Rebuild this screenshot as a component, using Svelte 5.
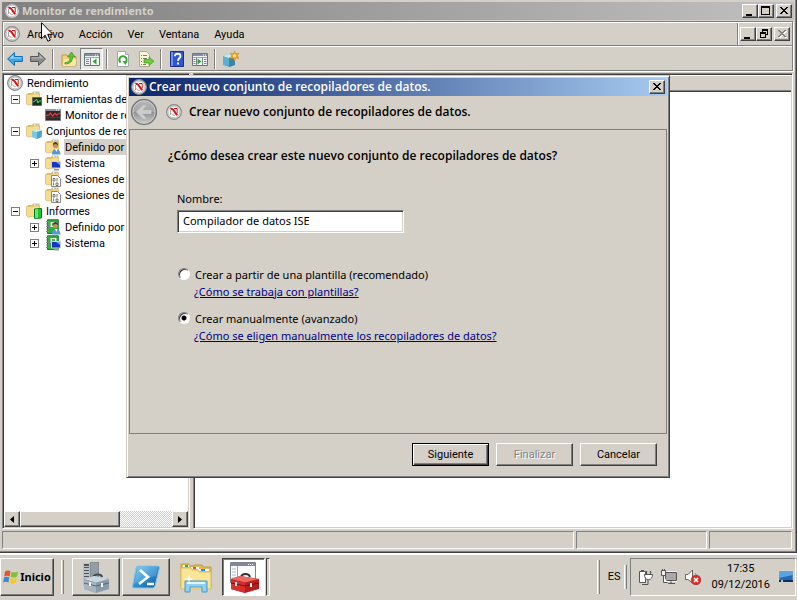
<script>
  const menus = ['Archivo', 'Acción', 'Ver', 'Ventana', 'Ayuda'];
  const tree = [
    { level: 0, icon: 'gauge', text: 'Rendimiento' },
    { level: 1, sign: '-', icon: 'folder', badge: 'monitor', text: 'Herramientas de' },
    { level: 2, icon: 'chart', text: 'Monitor de re' },
    { level: 1, sign: '-', icon: 'folder', badge: 'cube', text: 'Conjuntos de rec' },
    { level: 2, icon: 'folder', badge: 'user', text: 'Definido por', selected: true },
    { level: 2, sign: '+', icon: 'folder', badge: 'screen', text: 'Sistema' },
    { level: 2, icon: 'folder', badge: 'binary', text: 'Sesiones de' },
    { level: 2, icon: 'folder', badge: 'binary', text: 'Sesiones de' },
    { level: 1, sign: '-', icon: 'folder', badge: 'report', text: 'Informes' },
    { level: 2, sign: '+', icon: 'book', badge: 'user', text: 'Definido por' },
    { level: 2, sign: '+', icon: 'book', badge: 'screen', text: 'Sistema' }
  ];
  const tools = [
    ['back', 'forward'],
    ['up', 'panel'],
    ['refresh', 'export'],
    ['help', 'pane'],
    ['newset']
  ];
  const toolNames = {
    back: 'Atrás', forward: 'Adelante', up: 'Subir un nivel', panel: 'Árbol de consola',
    refresh: 'Actualizar', export: 'Exportar lista', help: 'Ayuda', pane: 'Panel de acciones', newset: 'Nuevo'
  };
  let name = $state('Compilador de datos ISE');
  let mode = $state('manual');
</script>

{#snippet gauge()}
  <svg class="i16" viewBox="0 0 16 16" aria-hidden="true">
    <circle cx="8" cy="8" r="7.4" fill="#dcdcdc" stroke="#858585" stroke-width="1.1" />
    <circle cx="8" cy="8" r="5.8" fill="#fff" stroke="#bdbdbd" stroke-width=".8" />
    <path d="M4.500 11V6" stroke="#a5a5a5" stroke-width="1" />
    <path d="M4.500 5C6 4.300 7.500 6 8.500 7.500s1.500 2.700 3 3.500" fill="none" stroke="#d31313" stroke-width="2" />
    <path d="M8 4.500h3.200v4.500" fill="none" stroke="#d31313" stroke-width="1" />
    <path d="M5.500 9.500c.5 1.500 1.500 2 3 2" fill="none" stroke="#c66" stroke-width=".8" />
  </svg>
{/snippet}

{#snippet glyph(kind)}
  <svg class="g" viewBox="0 0 12 10" aria-hidden="true" shape-rendering="crispEdges">
    {#if kind === 'min'}
      <path d="M2 8h6v2H2z" />
    {:else if kind === 'max'}
      <path d="M1 0h9v9H1zM2 2v6h7V2z" fill-rule="evenodd" />
    {:else if kind === 'restore'}
      <path d="M4 0h6v6H8V5h1V2H5v1H4zM2 3h6v6H2zM3 5v3h4V5z" fill-rule="evenodd" />
    {:else}
      <path d="M2 1h2v1h1v1h2V2h1V1h2v1H9v1H8v1H7v1h1v1h1v1h1v1H8V7H7V6H5v1H4v1H2V7h1V6h1V5h1V4H4V3H3V2H2z" />
    {/if}
  </svg>
{/snippet}

{#snippet treeIcon(icon, badge)}
  <svg class="i16" viewBox="0 0 16 16" aria-hidden="true">
    {#if icon === 'folder'}
      <path d="M1 3.5 2 2h4l1-1.5h6.5V13H1z" fill="#e3bd62" />
      <path d="M8 1.2h4v2H8z" fill="#fff" /><path d="M9.5 1.4h2v1h-2z" fill="#4ba0dc" />
      <path d="M.5 3.5h6L8 2.8h5.5V13L2 14 .5 13z" fill="#f5dc90" stroke="#dbb866" stroke-width=".7" />
    {:else if icon === 'book'}
      <path d="M2.5.8h10.8v13.7H2.5z" fill="#2fae3d" stroke="#187527" />
      <path d="M5.5 3h6v5h-6z" fill="#e2f5df" /><path d="M7 4h3v3H7z" fill="#4caf55" />
      <path d="M1 2.5h3M1 5h3M1 7.5h3M1 10h3M1 12.5h3" stroke="#889" stroke-width="1" />
    {:else if icon === 'chart'}
      <path d="M.5 2.500h15v11H.5z" fill="#2b2b2e" stroke="#777" /><path d="M0 2h16v2H0z" fill="#92969c" /><path d="M11 2.500h1v1h-1zM13 2.500h1v1h-1z" fill="#fff" />
      <path d="M1 8.5 4 8l1.500-2 2 3 2.500-2.500 1.500 1.500 3.500-2" fill="none" stroke="#e23b3b" stroke-width="1.300" />
      <path d="m1 11 4-1 3 1 3-1 4 .5" fill="none" stroke="#8d2323" />
    {/if}
    {#if badge === 'monitor'}
      <path d="M6.500 6.500h9v8h-9z" fill="#173320" stroke="#667" /><path d="m7 11 2-1 1.500-2L12 12l1-2h2" fill="none" stroke="#4fe04f" />
    {:else if badge === 'cube'}
      <path d="m6 8 5-2 5 1.500-.6 6.500-4.700 2L6 14z" fill="#7cc7e0" /><path d="m6 8 5 1 5-1.500L11 6z" fill="#c8eef8" /><path d="M11 9v7l4.400-2 .6-6.500z" fill="#4da3c4" />
    {:else if badge === 'user'}
      <path d="M7 15.500c0-4 1.500-5.500 4-5.500s4.500 2 4.500 5.500z" fill="#5b97cf" /><path d="m10 10 1.500 3 1-3z" fill="#fff" />
      <circle cx="10.500" cy="6.500" r="2.600" fill="#c98d5c" /><path d="M7.800 6c0-4 5.400-4 5.300.4L11 4.800z" fill="#493a2c" />
    {:else if badge === 'screen'}
      <path d="M6.500 6.500h9v6.500h-9z" fill="#1635c4" stroke="#c9d2dc" /><path d="M11 7h4v3z" fill="#7aa2f4" /><path d="M9 14h5v1.500H9z" fill="#8e99a5" />
    {:else if badge === 'binary'}
      <path d="M6.500 4.500h6l3 3v8h-9z" fill="#fff" stroke="#888" /><path d="M8 7.500h2v2.500H8zM12 7v3.500M8.500 11.500v3M11 12h2v2.500h-2z" fill="none" stroke="#555" stroke-width=".8" />
    {:else if badge === 'report'}
      <path d="m8.500 6 7-.5V15l-7 .5z" fill="#20c52d" stroke="#08791a" /><path d="m9 6.500 3-.4V15l-3 .2z" fill="#6fe36f" />
    {/if}
  </svg>
{/snippet}

{#snippet toolIcon(kind)}
  <svg class="i16" viewBox="0 0 16 16" aria-hidden="true">
    {#if kind === 'back'}
      <path d="M.6 8 7.500 1.500v4h7.900v5H7.500v4z" fill="#39a5e8" stroke="#1670b8" /><path d="M2.500 7.500 6.500 3.800v2.700h8v1z" fill="#a5dcfb" />
    {:else if kind === 'forward'}
      <path d="M15.400 8 8.500 1.500v4H.6v5h7.900v4z" fill="#8b8b8b" stroke="#585858" /><path d="M13.500 7.500 9.500 3.800v2.700h-8v1z" fill="#bbb" />
    {:else if kind === 'up'}
      <path d="M1 6V4h5l1 1.500h8V15H1z" fill="#f1d27b" stroke="#c69a3b" /><path d="M1.500 15 3 8h12.500l-1 7z" fill="#fae7a5" />
      <path d="M4 11.500c4 0 5-2 5-5.500H6.500L10.500 1 14 6h-2.400c0 4-2 7-7.600 7z" fill="#5fc132" stroke="#2f8a14" stroke-width=".6" />
    {:else if kind === 'panel' || kind === 'pane'}
      <path d="M.5 2.500h15v12H.5z" fill="#f3f4f6" stroke="#6d737b" /><path d="M1 3h14v2H1z" fill="#8190a3" /><path d="M11 3.500h1v1h-1zM13 3.500h1v1h-1z" fill="#fff" />
      <path d="M1 6.500h14" stroke="#9aa4af" />
      {#if kind === 'panel'}
        <path d="M6.500 7v7" stroke="#7d8792" /><path d="M2 8.500h3M2 10.500h3M2 12.500h3" stroke="#7d8792" /><path d="m8.500 10.500 4-3v6z" fill="#2fa52b" />
      {:else}
        <path d="M4.500 7v7M10.500 7v7" stroke="#7d8792" /><path d="M1.500 8.500h2M1.500 10.500h2M1.500 12.500h2M12 8.500h2.500M12 10.500h2.500M12 12.500h2.500" stroke="#7d8792" /><path d="m9.500 10.500-4-3v6z" fill="#2fa52b" />
      {/if}
    {:else if kind === 'refresh'}
      <path d="M2.500.500h8l3 3v12h-11z" fill="#fff" stroke="#a3a7ab" /><path d="M10.500.500v3h3" fill="#dde" stroke="#a3a7ab" />
      <path d="M5.600 11.500a3.600 3.600 0 1 1 5.200-.5" fill="none" stroke="#33a52f" stroke-width="2" /><path d="m7.500 10 5 .2-2.200 3.800z" fill="#33a52f" />
    {:else if kind === 'export'}
      <path d="M1.500.500h7l3 3v12h-10z" fill="#fcf6d9" stroke="#b0a98c" /><path d="M3 4.500h1M5 4.500h4M3 7.500h1M5 7.500h4M3 10.500h1M3 13.500h1M5 13.500h3" stroke="#777" />
      <path d="M6 8.500h5V6l5 4.300-5 4.200V12H6z" fill="#6fcd3b" stroke="#3b9a1c" stroke-width=".7" />
    {:else if kind === 'help'}
      <path d="M1.500.500h13v15h-13z" fill="#2f55cf" stroke="#15308f" /><path d="M2 1h2v14H2z" fill="#6e90ee" />
      <path d="M6 5.200C6 2 11.500 2 11.500 5.200c0 2-2.500 2.200-2.500 4.600M9 11.500v2" fill="none" stroke="#fff" stroke-width="1.900" />
    {:else}
      <path d="m0 5 6-2 6 2v9l-6 2-6-2z" fill="#5daed0" /><path d="m0 5 6-2 6 2-6 2z" fill="#c5e9f5" /><path d="M6 7v9l6-2V5z" fill="#3585ad" />
      <path d="m11.500 0 1.200 2.900L15.800 2l-1.400 2.800L16 7.500l-3-.6L11.500 10 10.200 7l-3.200.5 1.700-2.700L7.300 2l3 .9z" fill="#f5a623" stroke="#d27d0b" stroke-width=".5" /><circle cx="11.500" cy="4.800" r="1.500" fill="#ffe9a0" />
    {/if}
  </svg>
{/snippet}

<div class="desktop">
  <main class="window">
    <header class="title inactive">
      {@render gauge()}
      <h1>Monitor de rendimiento</h1>
      <div class="caption">
        <button aria-label="Minimizar">{@render glyph('min')}</button>
        <button aria-label="Maximizar">{@render glyph('max')}</button>
        <button class="close" aria-label="Cerrar">{@render glyph('x')}</button>
      </div>
    </header>

    <div class="rebar">
      <div class="menurow">
        {@render gauge()}
        <nav>
          {#each menus as m}<button class="menu">{m}</button>{/each}
        </nav>
        <div class="caption mdi">
          <button aria-label="Minimizar ventana">{@render glyph('min')}</button>
          <button aria-label="Restaurar ventana">{@render glyph('restore')}</button>
          <button class="close" aria-label="Cerrar ventana" disabled>{@render glyph('x')}</button>
        </div>
      </div>
      <div class="toolbar">
        {#each tools as group, i}
          {#if i}<span class="sep"></span>{/if}
          {#each group as t}
            <button class="tool" class:pressed={t === 'panel'} aria-label={toolNames[t]}>{@render toolIcon(t)}</button>
          {/each}
        {/each}
      </div>
    </div>

    <div class="work">
      <section class="treepane">
        <ul>
          {#each tree as n}
            <li class="l{n.level}">
              {#if n.level}<span class="slot">{#if n.sign}<button class="exp" class:plus={n.sign === '+'} aria-label="Expandir o contraer {n.text}"></button>{/if}</span>{/if}
              {#if n.icon === 'gauge'}{@render gauge()}{:else}{@render treeIcon(n.icon, n.badge)}{/if}
              <span class="label" class:selected={n.selected}>{n.text}</span>
            </li>
          {/each}
        </ul>
        <div class="scroll">
          <button class="raised" aria-label="Izquierda"><svg viewBox="0 0 4 7"><path d="M4 0v7L0 3.500z" /></svg></button>
          <div class="raised thumb"></div>
          <div class="track"></div>
          <button class="raised" aria-label="Derecha"><svg viewBox="0 0 4 7"><path d="M0 0v7l4-3.500z" /></svg></button>
        </div>
      </section>
      <section class="detail"><div class="colhead"></div></section>
    </div>

    <footer class="status"><span></span><span class="mid"></span><span class="end"></span></footer>

    <form class="dialog" role="dialog" aria-labelledby="dlg" onsubmit={(e) => e.preventDefault()}>
      <div class="title active">
        {@render gauge()}
        <h2 id="dlg">Crear nuevo conjunto de recopiladores de datos.</h2>
        <div class="caption"><button type="button" aria-label="Cerrar diálogo">{@render glyph('x')}</button></div>
      </div>
      <div class="dlghead">
        <button type="button" class="backbtn" aria-label="Volver">
          <svg viewBox="0 0 28 28">
            <defs><linearGradient id="ring" x2="0" y2="1"><stop offset="0" stop-color="#b9b9b9" /><stop offset=".48" stop-color="#a5a5a5" /><stop offset=".52" stop-color="#919191" /><stop offset="1" stop-color="#cecece" /></linearGradient></defs>
            <circle cx="14" cy="14" r="12.400" fill="url(#ring)" stroke="#777b80" stroke-width="1.500" />
            <circle cx="14" cy="14" r="11.200" fill="none" stroke="#d2d2d2" stroke-width=".8" />
            <path d="M6.500 14 13 7.800h2.800L11.600 12.500H21v3h-9.400l4.200 4.700H13z" fill="#c9cccd" stroke="#e1e1e1" stroke-width=".5" />
          </svg>
        </button>
        {@render gauge()}
        <strong>Crear nuevo conjunto de recopiladores de datos.</strong>
      </div>
      <div class="page">
        <h3>¿Cómo desea crear este nuevo conjunto de recopiladores de datos?</h3>
        <div class="fields">
          <label for="name">Nombre:</label>
          <input id="name" type="text" bind:value={name} />
          <div class="option">
            <label><input type="radio" name="mode" value="template" bind:group={mode} />Crear a partir de una plantilla (recomendado)</label>
            <a href="#plantillas">¿Cómo se trabaja con plantillas?</a>
          </div>
          <div class="option">
            <label><input type="radio" name="mode" value="manual" bind:group={mode} />Crear manualmente (avanzado)</label>
            <a href="#recopiladores">¿Cómo se eligen manualmente los recopiladores de datos?</a>
          </div>
        </div>
      </div>
      <div class="actions">
        <button class="push default">Siguiente</button>
        <button type="button" class="push" disabled>Finalizar</button>
        <button type="button" class="push">Cancelar</button>
      </div>
    </form>
  </main>

  <footer class="taskbar">
    <button class="raised start">
      <svg viewBox="0 0 16 16" aria-hidden="true">
        <path d="M2 2.500c2-1.200 3.700-1.200 5.500-.2L6.600 7.400c-1.700-1-3.500-1-5.400 0z" fill="#e8542a" />
        <path d="M8.500 2.700c2 1 4 1 6.500-.3l-1 5.100c-2 1.200-4.300 1.200-6.400.3z" fill="#7cc035" />
        <path d="M1 8.500c2-1.200 3.700-1 5.400 0l-1 5c-1.700-1-3.400-1-5.200.1z" fill="#3c86d8" />
        <path d="M7.400 8.900c2 1 4.200 1 6.400-.2l-1 5c-2 1.200-4.200 1.200-6.300.2z" fill="#f8c62d" />
      </svg>
      <b>Inicio</b>
    </button>
    <span class="grip"></span>
    <div class="apps">
      <button class="raised" aria-label="Administrador del servidor">
        <svg viewBox="0 0 32 32">
          <path d="M3 2h7v23H3z" fill="#b9c1c7" /><path d="M10 1l9 0v24h-9z" fill="#838d95" /><path d="M11 2h7v22h-7z" fill="#929da5" />
          <path d="M4 3h5v2H4zM4 6h5v1H4zM4 9h5v1H4zM4 12h5v1H4zM4 15h5v1H4z" fill="#4d565e" />
          <path d="M13 17c0-4 8-5 9-1" fill="none" stroke="#44494e" stroke-width="2" />
          <path d="m4 18 10-3 15 3v10l-13 4-12-4z" fill="#899ba8" /><path d="m4 18 10-3 15 3-13 3.500z" fill="#cbd7df" /><path d="m4 19 12 3v10L4 28z" fill="#a6b5bf" />
          <path d="m4 22 12 3 13-3" fill="none" stroke="#566571" /><path d="M9 21h2v4H9zM21 22h2v4h-2z" fill="#edf3f6" />
        </svg>
      </button>
      <button class="raised" aria-label="PowerShell">
        <svg viewBox="0 0 32 32">
          <defs><linearGradient id="ps" x2="1" y2="1"><stop offset="0" stop-color="#75c9f1" /><stop offset=".5" stop-color="#2e8fd0" /><stop offset="1" stop-color="#115697" /></linearGradient></defs>
          <path d="M8 5h20q2 0 1.500 2L25 25q-.5 2-2.500 2H4q-2 0-1.500-2L6 7q.4-2 2-2z" fill="url(#ps)" stroke="#8cc6e8" /><path d="M8 6h20l-2 9c-7 1-12 3-22 8z" fill="#fff" opacity=".16" />
          <path d="m10 9 8 7-9 7M17 23h7" fill="none" stroke="#fff" stroke-width="2.600" />
        </svg>
      </button>
      <button class="flat" aria-label="Explorador de archivos">
        <svg viewBox="0 0 32 32">
          <path d="M1 5V3h8l1 2h4V4h8l1 2h8v20H1z" fill="#e3bb55" stroke="#c29a3d" /><path d="M3 4h6v2H3z" fill="#fff" /><path d="M5 4h3v2H5z" fill="#20b33a" />
          <path d="M11 6h8v2h-8z" fill="#fff" /><path d="M13 6h3v2h-3z" fill="#dd4b3a" /><path d="M18 8h11v2H18z" fill="#fff" /><path d="M21 8h4v2h-4z" fill="#1a91e2" />
          <path d="M1 7h10l1 2h6l1 2h12v17H1z" fill="#f9e596" stroke="#dfbd62" />
          <path d="M5 31V20h22v11h-5v-5H10v5z" fill="#8ed1f2" stroke="#459bcb" /><path d="M7 22h18" stroke="#dff5ff" stroke-width="2" />
          <path d="m9 13 .7 4.300L14 18l-4.300.7L9 23l-.7-4.300L4 18l4.300-.7z" fill="#fff" />
        </svg>
      </button>
      <div class="stack">
        <button class="sunken" aria-label="Monitor de rendimiento">
          <svg viewBox="0 0 32 32">
            <path d="M2.500 1.500h25v20h-25z" fill="#f9fafb" stroke="#7d838c" /><path d="M3 2h24v3H3z" fill="#7d8ba1" /><path d="M20 3h1v1h-1zM22 3h1v1h-1zM24 3h1v1h-1z" fill="#fff" />
            <path d="M9.500 5v15" stroke="#9ba3ac" /><path d="M4 8h4M4 11h4M4 14h4M4 17h4" stroke="#b3b9c1" />
            <path d="M13 16c1-4 8-4 9 0" fill="none" stroke="#303030" stroke-width="1.800" />
            <path d="m3 18 9-3 19 3v10l-14 4-14-4z" fill="#b71d1d" /><path d="m3 18 9-3 19 3-14 3.500z" fill="#ea6b61" /><path d="m3 19 14 3v10L3 28z" fill="#d83030" />
            <path d="m3 22 14 3 14-3" fill="none" stroke="#7b0c0c" /><path d="M7 21h2v4H7zM22 22h2v4h-2z" fill="#eee" />
          </svg>
        </button>
        <span></span>
      </div>
    </div>
    <span class="grip push-right"></span>
    <span class="lang">ES</span>
    <span class="grip short"></span>
    <div class="tray">
      <svg class="i16" viewBox="0 0 16 16" role="img" aria-label="Energía"><path d="M2.500 2.500h6v11h-6zM4 1.500h3" fill="#fff" stroke="#555" /><path d="M5 15.500h6V11" fill="none" stroke="#555" /><path d="M9.500 2v4M13.500 2v4" stroke="#555" stroke-width="1.200" /><path d="M7.500 5.500h8c0 3-1 5-4 5s-4-2-4-5z" fill="#fff" stroke="#555" /></svg>
      <svg class="i16" viewBox="0 0 16 16" role="img" aria-label="Red"><path d="M4.500 3.500h11v8h-11z" fill="#b5b5b5" stroke="#fff" stroke-width="2.500" /><path d="M4.500 3.500h11v8h-11z" fill="#a9a9a9" stroke="#555" /><path d="M7 14.500h7M10 12v2" stroke="#555" /><path d="M.5 1.500h4v5h-4zM2.500 6.500v7h4" fill="#f4f4f4" stroke="#555" /><path d="M1.500 1V0M3.500 1V0" stroke="#555" /></svg>
      <svg class="i16" viewBox="0 0 16 16" role="img" aria-label="Sin sonido"><path d="M.5 5.500h2.500L7.500 1v13L3 10.500H.5z" fill="#f7f7f7" stroke="#666" /><path d="M10 4c1 1 1.500 2 1.500 3" fill="none" stroke="#888" /><circle cx="11" cy="11" r="4.800" fill="#dc2f2a" stroke="#a21614" stroke-width=".6" /><path d="m9 9 4 4M13 9l-4 4" stroke="#fff" stroke-width="1.600" /></svg>
      <div class="clock"><time>17:35</time><time>09/12/2016</time></div>
      <svg class="i16 desk" viewBox="0 0 16 16" role="img" aria-label="Escritorio"><path d="M1 2h14v10H1z" fill="#2469b5" stroke="#d9e7f2" stroke-width=".5" /><path d="M1 2h14v4L1 9z" fill="#5ba4e0" /><path d="M1 11h14v2H1z" fill="#102f55" /><circle cx="4" cy="12" r="1.200" fill="#9ce" /></svg>
    </div>
  </footer>

  <svg class="cursor" viewBox="0 0 12 21" aria-hidden="true"><path d="M.5.700v16l3.700-3.500 2.700 6 2.400-1-2.600-5.900h5z" fill="#fff" stroke="#000" /></svg>
</div>

<style>
  :global(body) { margin: 0; background: #d4d0c8; }
  .desktop {
    --ui: Roboto, Tahoma, sans-serif;
    --seg: 'Noto Sans', 'Open Sans', sans-serif;
    --bold: 'Open Sans', 'Noto Sans', sans-serif;
    position: relative; display: flex; flex-direction: column; min-height: 100vh;
    font: 11px/16px var(--ui); color: #000; background: #d4d0c8; overflow: hidden;
  }
  .desktop *, .desktop { box-sizing: border-box; }
  button { font: inherit; color: #000; padding: 0; margin: 0; border: 0; background: #d4d0c8; display: flex; align-items: center; justify-content: center; }
  h1, h2, h3, ul { margin: 0; padding: 0; font-size: inherit; }
  h2, h3, strong { font: 600 12px/16px var(--bold); }
  h1, b { font: 700 11px/16px var(--seg); }
  svg { display: block; flex: none; }
  .i16 { width: 16px; height: 16px; }

  .window {
    position: relative; flex: 1; display: flex; flex-direction: column; padding: 2px;
    border-bottom: 1px solid #404040; border-right: 1px solid #404040;
    box-shadow: inset -1px -1px #808080;
  }
  .title { display: flex; align-items: center; height: 18px; padding: 0 2px; gap: 2px; }
  .inactive { background: linear-gradient(90deg, #808080, #c0c0c0); color: #d4d0c8; }
  .active { background: linear-gradient(90deg, #0a246a, #a6caf0); color: #fff; }
  .title h1, .title h2 { flex: 1; }
  .caption { display: flex; }
  .caption button, .raised {
    border: 1px solid; border-color: #fff #404040 #404040 #fff; box-shadow: inset -1px -1px #808080;
  }
  .caption button { width: 16px; height: 14px; }
  .caption .close { margin-left: 2px; }
  .caption button:disabled { color: #808080; }
  .g { width: 12px; height: 10px; fill: currentColor; }
  button:disabled .g { filter: drop-shadow(1px 1px #fff); }

  .rebar { margin: 1px 1px 0 0; border: 1px solid #808080; box-shadow: 1px 1px #fff, inset 1px 1px #fff; }
  .menurow { display: flex; align-items: center; height: 24px; padding: 1px 0 0 1px; border-bottom: 1px solid #808080; box-shadow: 0 1px #fff; }
  .menurow nav { flex: 1; display: flex; align-self: stretch; border-right: 1px solid #808080; }
  .menu { padding: 1px 8px 0 7px; background: none; }
  .mdi { padding: 0 2px 0 1px; border-left: 1px solid #fff; align-self: stretch; align-items: center; }
  .toolbar { display: flex; align-items: center; height: 24px; padding-top: 1px; }
  .tool { width: 23px; height: 22px; background: none; }
  .pressed { border: 1px solid; border-color: #808080 #fff #fff #808080; background: #ebe9e5; }
  .sep { width: 2px; height: 20px; margin: 0 3px; border-left: 1px solid #808080; border-right: 1px solid #fff; }

  .work { flex: 1; display: flex; gap: 3px; margin: 2px 1px 0 0; }
  .treepane, .detail { border: 1px solid; border-color: #808080 #fff #fff #808080; box-shadow: inset 1px 1px #404040, inset -1px -1px #d4d0c8; padding: 1px; background: #fff; }
  .treepane { width: 188px; flex: none; display: flex; flex-direction: column; }
  .detail { flex: 1; }
  .colhead { height: 17px; background: #d4d0c8; border-top: 1px solid #fff; border-bottom: 1px solid #404040; box-shadow: inset 0 -1px #808080; }
  ul { flex: 1; list-style: none; overflow: hidden; }
  li { display: flex; align-items: center; gap: 3px; height: 16px; white-space: nowrap; }
  .l0 { padding-left: 3px; }
  .l1 { padding-left: 7px; }
  .l2 { padding-left: 26px; }
  .slot { width: 12px; }
  .exp { width: 9px; height: 9px; border: 1px solid #808080; background: linear-gradient(#000, #000) center / 5px 1px no-repeat, #fff; }
  .plus { background: linear-gradient(#000, #000) center / 5px 1px no-repeat, linear-gradient(#000, #000) center / 1px 5px no-repeat, #fff; }
  .label { padding: 2px 1px 0; line-height: 14px; }
  .selected { flex: 1; background: #d4d0c8; }
  .scroll { display: flex; height: 16px; }
  .scroll button { width: 16px; }
  .scroll svg { width: 4px; height: 7px; }
  .thumb { width: 100px; background: #d4d0c8; }
  .track { flex: 1; background: repeating-conic-gradient(#fff 0 25%, #d4d0c8 0 50%) 0 0 / 2px 2px; }

  .status { display: flex; gap: 2px; height: 21px; padding: 2px 2px 1px 0; }
  .status span { flex: 1; border: 1px solid; border-color: #808080 #fff #fff #808080; }
  .status .mid { flex: 0 0 131px; }
  .status .end { flex: 0 0 83px; }

  .dialog {
    position: absolute; left: 126px; top: 75px; width: 544px; padding: 2px; background: #d4d0c8;
    border: 1px solid; border-color: #d4d0c8 #404040 #404040 #d4d0c8;
    box-shadow: inset 1px 1px #fff, inset -1px -1px #808080; font: 11px/16px var(--seg);
  }
  .dlghead { display: flex; align-items: center; height: 33px; padding: 0 1px 2px; }
  .dlghead .i16 { margin: 0 7px 0 8px; }
  .backbtn { border-radius: 50%; background: none; }
  .backbtn svg { width: 28px; height: 28px; }
  .page { min-height: 305px; padding: 18px 38px; border: 1px solid #808080; }
  .fields { display: flex; flex-direction: column; align-items: flex-start; padding: 27px 0 0 9px; }
  #name { width: 227px; height: 23px; margin: 3px 0 23px; padding: 0 5px 2px; font: inherit; color: #000; background: #fff; border: 1px solid; border-color: #808080 #fff #fff #808080; box-shadow: inset 1px 1px #404040, inset -1px -1px #d4d0c8; outline: 0; border-radius: 0; }
  .option { margin-top: 11px; display: flex; flex-direction: column; align-items: flex-start; gap: 1px; }
  .option label { display: flex; align-items: center; gap: 5px; }
  .option a { margin-left: 17px; color: #00007f; text-decoration: underline; }
  input[type='radio'] { appearance: none; width: 12px; height: 12px; margin: 0 0 2px 1px; border-radius: 50%; border: 1px solid; border-color: #808080 #fff #fff #808080; box-shadow: inset 1px 1px #404040; background: #fff; }
  input[type='radio']:checked { background: radial-gradient(circle at 5px 5px, #000 0 2px, #fff 3px); }
  .actions { display: flex; justify-content: flex-end; gap: 7px; padding: 9px 10px 9px 0; font: 11px/16px var(--ui); }
  .push { width: 77px; height: 23px; border: 1px solid; border-color: #fff #404040 #404040 #fff; box-shadow: inset -1px -1px #808080; }
  .push:disabled { color: #808080; text-shadow: 1px 1px #fff; }
  .default { border-color: #000; box-shadow: inset 1px 1px #fff, inset -1px -1px #404040, inset -2px -2px #808080; }

  .taskbar { display: flex; align-items: center; height: 47px; padding: 5px 1px 4px 0; box-shadow: inset 0 2px #fff, inset 0 1px #d4d0c8; background: #d4d0c8; }
  .start { width: 54px; height: 38px; gap: 1px; }
  .start svg { width: 16px; height: 16px; }
  .grip { width: 3px; height: 34px; margin: 0 8px 0 7px; border-left: 1px solid #fff; border-right: 1px solid #808080; }
  .short { height: 24px; margin: 0 3px 0 4px; }
  .apps { display: flex; gap: 2px; }
  .apps button { width: 48px; height: 38px; }
  .apps svg { width: 32px; height: 32px; }
  .stack { display: flex; gap: 1px; }
  .stack span { width: 4px; border: 1px solid; border-color: #404040 #fff #fff #404040; }
  .apps .sunken { width: 43px; border: 1px solid; border-color: #404040 #fff #fff #404040; box-shadow: inset 1px 1px #808080; background: #fff; }
  .push-right { margin-left: auto; }
  .tray { display: flex; align-items: center; gap: 8px; height: 38px; padding: 0 1px 0 6px; border: 1px solid; border-color: #808080 #fff #fff #808080; }
  .clock { display: flex; flex-direction: column; align-items: center; margin-left: 2px; }
  .cursor { position: absolute; left: 41px; top: 22px; width: 12px; height: 21px; }
</style>
